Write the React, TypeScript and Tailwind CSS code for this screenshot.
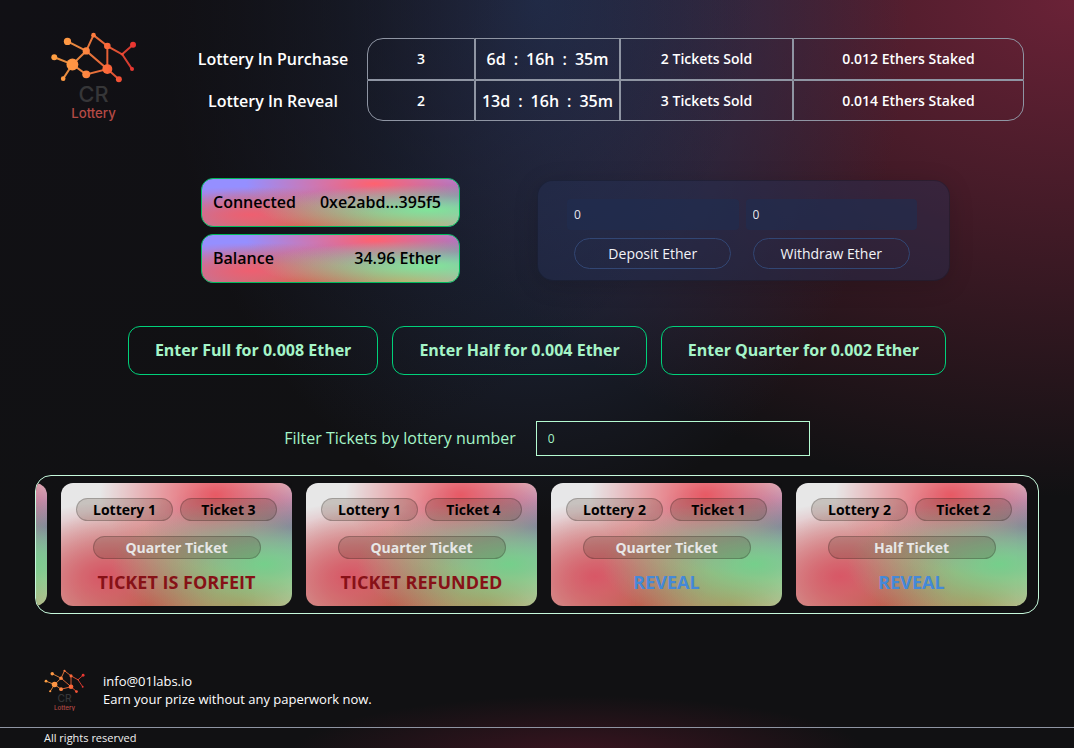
import React from "react";

const meshWallet =
  "bg-[#958fff] bg-[radial-gradient(66%_54%_at_88%_66%,#81e499_0,transparent_100%),radial-gradient(50%_62%_at_67%_10%,#ff626e_0,transparent_100%),radial-gradient(50%_60%_at_19%_76%,#ee5f70_0,transparent_100%),radial-gradient(64%_42%_at_100%_36%,#8269c8_0,transparent_100%),radial-gradient(64%_84%_at_38%_100%,#be7346_0,transparent_100%),radial-gradient(56%_74%_at_78%_100%,#e0ad6a_0,transparent_100%)]";
const meshTicket =
  "bg-white bg-[radial-gradient(66%_54%_at_88%_66%,#81e499_0,transparent_100%),radial-gradient(50%_62%_at_67%_10%,#ff626e_0,transparent_100%),radial-gradient(50%_60%_at_19%_76%,#ee5f70_0,transparent_100%),radial-gradient(64%_42%_at_100%_36%,#8269c8_0,transparent_100%),radial-gradient(64%_84%_at_38%_100%,#be7346_0,transparent_100%),radial-gradient(56%_74%_at_78%_100%,#e0ad6a_0,transparent_100%)]";

function Logo({ id, className }: { id: string; className: string }) {
  return (
    <svg viewBox="58 32 264 270" className={className} role="img" aria-label="CR Lottery">
      <defs>
        <linearGradient id={id} gradientUnits="userSpaceOnUse" x1="62" y1="0" x2="320" y2="0">
          <stop offset="0" stopColor="#ffa042" />
          <stop offset="0.3" stopColor="#ff9344" />
          <stop offset="0.65" stopColor="#fd6a3a" />
          <stop offset="1" stopColor="#e63030" />
        </linearGradient>
      </defs>
      <g stroke={`url(#${id})`} strokeWidth="6" fill="none" strokeLinecap="round" opacity="0.9">
        <path d="M111 62 168 91 190 43 232 76 232 146 168 91 126 132 71 110M126 132 98 175M126 132 168 162 232 146 267 177M232 76 277 101 310 72M277 101 307 146" />
      </g>
      <g fill={`url(#${id})`}>
        <circle cx="111" cy="62" r="11" />
        <circle cx="190" cy="43" r="7" />
        <circle cx="168" cy="91" r="11" />
        <circle cx="232" cy="76" r="10" />
        <circle cx="71" cy="110" r="9" />
        <circle cx="126" cy="132" r="18" />
        <circle cx="98" cy="175" r="7" />
        <circle cx="168" cy="162" r="12" />
        <circle cx="232" cy="146" r="15" />
        <circle cx="267" cy="177" r="9" />
        <circle cx="310" cy="72" r="9" />
        <circle cx="307" cy="146" r="6" />
        <circle cx="277" cy="101" r="4" />
      </g>
      <text x="190" y="246" textAnchor="middle" fontFamily="Inter, sans-serif" fontSize="66" fontWeight="500" fill="#363638">
        CR
      </text>
      <text x="190" y="293" textAnchor="middle" fontFamily="Inter, sans-serif" fontSize="40" fontWeight="500" fill="#b54a45">
        Lottery
      </text>
    </svg>
  );
}

const rounds = [
  { label: "Lottery In Purchase", no: "3", time: ["6d", "16h", "35m"], sold: "2 Tickets Sold", staked: "0.012 Ethers Staked" },
  { label: "Lottery In Reveal", no: "2", time: ["13d", "16h", "35m"], sold: "3 Tickets Sold", staked: "0.014 Ethers Staked" },
];

const cell = "border border-[#8f95a3] p-0 text-sm";

function RoundsTable() {
  return (
    <table className="min-w-0 flex-1 table-fixed border-separate border-spacing-0 text-center font-semibold text-white">
      <colgroup>
        <col className="w-[188px]" />
        <col className="w-[108px]" />
        <col className="w-[145px]" />
        <col className="w-[173px]" />
        <col />
      </colgroup>
      <tbody>
        {rounds.map((r, i) => (
          <tr key={r.label} className={i === 0 ? "h-[42px]" : "h-[41px]"}>
            <th scope="row" className="p-0 text-base font-semibold">
              {r.label}
            </th>
            <td className={`${cell} ${i === 0 ? "rounded-tl-2xl" : "rounded-bl-2xl"}`}>{r.no}</td>
            <td className="border border-[#8f95a3] p-0">
              <span className="flex justify-center gap-2 text-base font-semibold">
                <span>{r.time[0]}</span>
                <span>:</span>
                <span>{r.time[1]}</span>
                <span>:</span>
                <span>{r.time[2]}</span>
              </span>
            </td>
            <td className={cell}>{r.sold}</td>
            <td className={`${cell} ${i === 0 ? "rounded-tr-2xl" : "rounded-br-2xl"}`}>{r.staked}</td>
          </tr>
        ))}
      </tbody>
    </table>
  );
}

function WalletRow({ name, value }: { name: string; value: string }) {
  return (
    <div
      className={`flex h-[49px] items-center justify-between rounded-xl border border-[#00b85c] pr-[18px] pb-0.5 pl-[11px] text-base font-semibold text-black ${meshWallet}`}
    >
      <span>{name}</span>
      <span>{value}</span>
    </div>
  );
}

function Transfer({ name }: { name: string }) {
  return (
    <div className="flex flex-1 flex-col items-center gap-2">
      <input
        aria-label={`${name} amount`}
        defaultValue="0"
        className="h-[31px] w-full rounded bg-[#202d50]/60 px-[7px] text-xs text-[#e6e8ee] outline-none"
      />
      <button className="h-[31px] w-[157px] rounded-full border border-[#324673] text-sm text-[#f2f3f7]">{name}</button>
    </div>
  );
}

const entries = ["Enter Full for 0.008 Ether", "Enter Half for 0.004 Ether", "Enter Quarter for 0.002 Ether"];

const tickets = [
  { lottery: 1, ticket: 3, size: "Quarter", status: "TICKET IS FORFEIT" },
  { lottery: 1, ticket: 4, size: "Quarter", status: "TICKET REFUNDED" },
  { lottery: 2, ticket: 1, size: "Quarter", status: "REVEAL" },
  { lottery: 2, ticket: 2, size: "Half", status: "REVEAL" },
];

const card = "h-[123px] w-[231px] shrink-0 rounded-xl opacity-90";
const pill = "flex h-[23px] items-center justify-center rounded-full border border-black/20 bg-[#50321e]/20";

export default function App() {
  return (
    <div className="flex min-h-screen flex-col bg-[#111113] bg-[radial-gradient(27%_8%_at_54%_101%,#3a1420_0,transparent_100%),radial-gradient(at_0%_0%,#111015_0,transparent_50%),radial-gradient(at_50%_0%,#27355a_0,transparent_49%),radial-gradient(at_100%_0%,#6a2237_0,transparent_47%)] font-['Open_Sans','Noto_Sans',sans-serif]">
      <header className="flex items-start gap-[42px] pt-[31px] pr-[50px] pl-[50px]">
        <Logo id="header-logo" className="h-[90px] w-[87px] shrink-0" />
        <div className="flex min-w-0 flex-1 pt-[7px]">
          <RoundsTable />
        </div>
      </header>

      <main>
        <section className="mx-auto mt-[57px] grid max-w-[826px] grid-cols-2 items-center">
          <div className="mx-auto flex w-[259px] flex-col gap-[7px]">
            <WalletRow name="Connected" value="0xe2abd...395f5" />
            <WalletRow name="Balance" value="34.96 Ether" />
          </div>
          <div className="flex gap-[7px] rounded-2xl border border-black/20 bg-[#26325a]/40 pt-[18px] pr-8 pb-[11px] pl-[29px] shadow-[0_4px_24px_rgba(0,0,0,0.15)]">
            <Transfer name="Deposit Ether" />
            <Transfer name="Withdraw Ether" />
          </div>
        </section>

        <section className="mt-[43px] flex justify-center gap-3.5 text-base font-bold text-[#a5f5c8]">
          {entries.map((label) => (
            <button key={label} className="h-[49px] rounded-xl border border-[#00d17a] px-[26px] pb-0.5">
              {label}
            </button>
          ))}
        </section>

        <section className="mt-[46px] flex items-center justify-center gap-5 pl-5 text-[#a5f5c8]">
          <label htmlFor="lottery-filter" className="pb-0.5 text-base">
            Filter Tickets by lottery number
          </label>
          <input
            id="lottery-filter"
            defaultValue="0"
            className="h-[35px] w-[274px] border border-[#b5fbd2] bg-transparent px-[11px] text-xs outline-none"
          />
        </section>

        <section className="mx-[35px] mt-[19px] flex justify-end gap-3.5 overflow-hidden rounded-2xl border border-[#c6f9dc] py-[7px] pr-[11px]">
          <div aria-hidden="true" className={`${card} ${meshTicket}`} />
          {tickets.map((t) => (
            <article
              key={`${t.lottery}-${t.ticket}`}
              className={`${card} ${meshTicket} flex flex-col items-center pt-[15px] text-sm font-bold`}
            >
              <div className="flex gap-[7px] text-black">
                <span className={`${pill} w-[97px]`}>Lottery {t.lottery}</span>
                <span className={`${pill} w-[97px]`}>Ticket {t.ticket}</span>
              </div>
              <span className={`${pill} mt-[15px] w-[168px] text-white`}>{t.size} Ticket</span>
              {t.status === "REVEAL" ? (
                <button className="mt-[9px] text-lg text-[#4a96ee]">REVEAL</button>
              ) : (
                <p className="mt-[9px] text-lg text-[#941218]">{t.status}</p>
              )}
            </article>
          ))}
        </section>
      </main>

      <footer className="mt-auto">
        <div className="flex items-center gap-[18px] pb-4 pl-11 text-white">
          <Logo id="footer-logo" className="h-[42px] w-[41px] shrink-0" />
          <div className="text-[13px] leading-[18px]">
            <p>
              <a href="mailto:info@01labs.io">info@01labs.io</a>
            </p>
            <p>Earn your prize without any paperwork now.</p>
          </div>
        </div>
        <p className="border-t border-[#8f95a3] pl-11 text-[11px] leading-5 text-[#f0f0f0]">All rights reserved</p>
      </footer>
    </div>
  );
}
